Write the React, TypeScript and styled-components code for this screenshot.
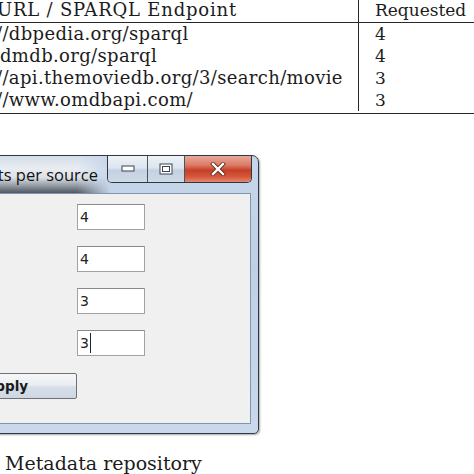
import React from "react";
import styled, { createGlobalStyle } from "styled-components";

const Global = createGlobalStyle`
  html, body { margin: 0; padding: 0; background: #fff; overflow: hidden; }
  body { width: 474px; height: 474px; }
`;

const Page = styled.div`
  display: flex;
  flex-direction: column;
  width: 474px;
  height: 474px;
  overflow: hidden;
`;

const Table = styled.div`
  display: grid;
  grid-template-columns: 358px 1fr;
  font-family: "DejaVu Serif", "Liberation Serif", serif;
  color: #1c1c1c;
  border-bottom: 1.5px solid #2a2a2a;
  padding-bottom: 2px;
`;

const Col = styled.div<{ $right?: boolean }>`
  display: flex;
  flex-direction: column;
  overflow: hidden;
  white-space: nowrap;
  font-size: ${(p) => (p.$right ? "17px" : "18px")};
  letter-spacing: ${(p) => (p.$right ? "0" : "0.35px")};
  border-left: ${(p) => (p.$right ? "1.5px solid #2a2a2a" : "none")};
  padding-left: ${(p) => (p.$right ? "16px" : "0")};
`;

const Head = styled.div<{ $shift?: number; $spacing?: number }>`
  height: 22px;
  line-height: 20px;
  border-bottom: 1.5px solid #2a2a2a;
  text-indent: ${(p) => p.$shift ?? 0}px;
  letter-spacing: ${(p) => p.$spacing ?? 0}px;
`;

const HeadWrap = styled.div`
  margin-left: -16px;
  padding-left: 16px;
  border-bottom: 1.5px solid #2a2a2a;
  height: 22px;
  line-height: 20px;
`;

const Cell = styled.div<{ $shift?: number }>`
  height: 22px;
  line-height: 22px;
  text-indent: ${(p) => p.$shift ?? 0}px;
`;

const Window = styled.div`
  margin-top: 41px;
  margin-left: -60px;
  width: 317px;
  height: 277px;
  display: flex;
  flex-direction: column;
  border: 1px solid #303a46;
  border-top-right-radius: 7px;
  border-bottom-right-radius: 5px;
  background: linear-gradient(180deg, #c6d6ea 0%, #bfd0e6 40%, #c9d8ea 100%);
  box-shadow: 1px 1px 2px rgba(0,0,0,0.35);
`;

const TitleBar = styled.div`
  height: 37px;
  display: flex;
  align-items: flex-start;
  flex-shrink: 0;
`;

const TitleGlow = styled.div`
  width: 170px;
  height: 37px;
  flex-shrink: 0;
  display: flex;
  align-items: flex-end;
  padding-left: 0px;
  padding-bottom: 7px;
  box-sizing: border-box;
  font-family: "Open Sans", "Noto Sans", sans-serif;
  font-size: 16.5px;
  color: #111;
  white-space: nowrap;
  background:
    linear-gradient(90deg, rgba(198,214,234,0) 0%, rgba(198,214,234,0) 80%, rgba(198,214,234,1) 100%),
    linear-gradient(180deg, #d4dde8 0%, #e9edf2 35%, #dde1e6 58%, #868e97 84%, #50575f 100%);
`;

const Buttons = styled.div`
  display: flex;
  height: 26px;
  margin-left: -4px;
  border: 1px solid #2e3640;
  border-top: none;
  border-bottom-left-radius: 5px;
  border-bottom-right-radius: 5px;
  overflow: hidden;
`;

const CapBtn = styled.div<{ $w: number; $close?: boolean }>`
  width: ${(p) => p.$w}px;
  height: 26px;
  display: flex;
  align-items: center;
  justify-content: center;
  border-left: 1px solid #4a5562;
  &:first-child { border-left: none; }
  background: ${(p) =>
    p.$close
      ? "linear-gradient(180deg, #e9a99a 0%, #dd7b66 35%, #c63f26 55%, #d5583c 80%, #e2886e 100%)"
      : "linear-gradient(180deg, #eef2f7 0%, #dde5ef 45%, #c4d1e0 55%, #cfdae7 100%)"};
`;

const Client = styled.div`
  flex: 1;
  margin: 0 7px 9px 8px;
  background: #f0f0f0;
  border: 1px solid #8196ae;
  display: flex;
  flex-direction: column;
  padding-top: 10px;
  padding-left: 127px;
  gap: 16px;
`;

const Field = styled.div`
  box-sizing: border-box;
  width: 68px;
  height: 26px;
  border: 1px solid #a2a2a2;
  border-top-color: #8a8a8a;
  background: #fff;
  display: flex;
  align-items: center;
  padding-left: 2px;
  font-family: "DejaVu Sans", "Liberation Sans", sans-serif;
  font-size: 14px;
  color: #222;
`;

const Caret = styled.span`
  display: inline-block;
  width: 1px;
  height: 20px;
  background: #222;
  margin-left: 1px;
`;

const ApplyButton = styled.div`
  box-sizing: border-box;
  margin-left: -141px;
  margin-top: 1px;
  width: 141px;
  height: 26px;
  border: 1px solid #707070;
  border-radius: 2px;
  display: flex;
  align-items: center;
  justify-content: center;
  font-family: "DejaVu Sans", "Liberation Sans", sans-serif;
  font-weight: bold;
  font-size: 13.5px;
  color: #1a1a1a;
  background: linear-gradient(180deg, #f6f7f9 0%, #eaedf1 45%, #d6dee8 55%, #cdd7e3 100%);
`;

const Caption = styled.div`
  margin-top: 18px;
  padding-left: 5px;
  font-family: "DejaVu Serif", "Liberation Serif", serif;
  font-size: 19px;
  line-height: 22px;
  color: #1c1c1c;
  white-space: nowrap;
`;

const MinIcon = () => (
  <svg width="14" height="8" viewBox="0 0 14 8">
    <rect x="1" y="1" width="12" height="5" fill="#fff" stroke="#3b4450" strokeWidth="1" />
  </svg>
);

const MaxIcon = () => (
  <svg width="14" height="12" viewBox="0 0 14 12">
    <rect x="1" y="1" width="12" height="10" fill="#fff" stroke="#3b4450" strokeWidth="1" />
    <rect x="3.5" y="3.5" width="7" height="5" fill="none" stroke="#3b4450" strokeWidth="1" />
  </svg>
);

const CloseIcon = () => (
  <svg width="16" height="14" viewBox="0 0 16 14">
    <path d="M3 2 L13 12 M13 2 L3 12" stroke="#5a2a20" strokeWidth="4" strokeLinecap="square" />
    <path d="M3 2 L13 12 M13 2 L3 12" stroke="#fff" strokeWidth="2.4" strokeLinecap="square" />
  </svg>
);

const rows = [
  { url: "//dbpedia.org/sparql", shift: -4, n: "4" },
  { url: "dmdb.org/sparql", shift: 0, n: "4" },
  { url: "//api.themoviedb.org/3/search/movie", shift: -4, n: "3" },
  { url: "//www.omdbapi.com/", shift: -4, n: "3" },
];

export default function App() {
  return (
    <Page>
      <Global />
      <Table>
        <Col>
          <Head $shift={-3} $spacing={0.8}>URL / SPARQL Endpoint</Head>
          {rows.map((r) => (
            <Cell key={r.url} $shift={r.shift}>{r.url}</Cell>
          ))}
        </Col>
        <Col $right>
          <HeadWrap>Requested</HeadWrap>
          {rows.map((r) => (
            <Cell key={r.url}>{r.n}</Cell>
          ))}
        </Col>
      </Table>
      <Window>
        <TitleBar>
          <TitleGlow>Requests per source</TitleGlow>
          <Buttons>
            <CapBtn $w={39}><MinIcon /></CapBtn>
            <CapBtn $w={36}><MaxIcon /></CapBtn>
            <CapBtn $w={66} $close><CloseIcon /></CapBtn>
          </Buttons>
        </TitleBar>
        <Client>
          <Field>4</Field>
          <Field>4</Field>
          <Field>3</Field>
          <Field>3<Caret /></Field>
          <ApplyButton>Apply</ApplyButton>
        </Client>
      </Window>
      <Caption>Metadata repository</Caption>
    </Page>
  );
}
